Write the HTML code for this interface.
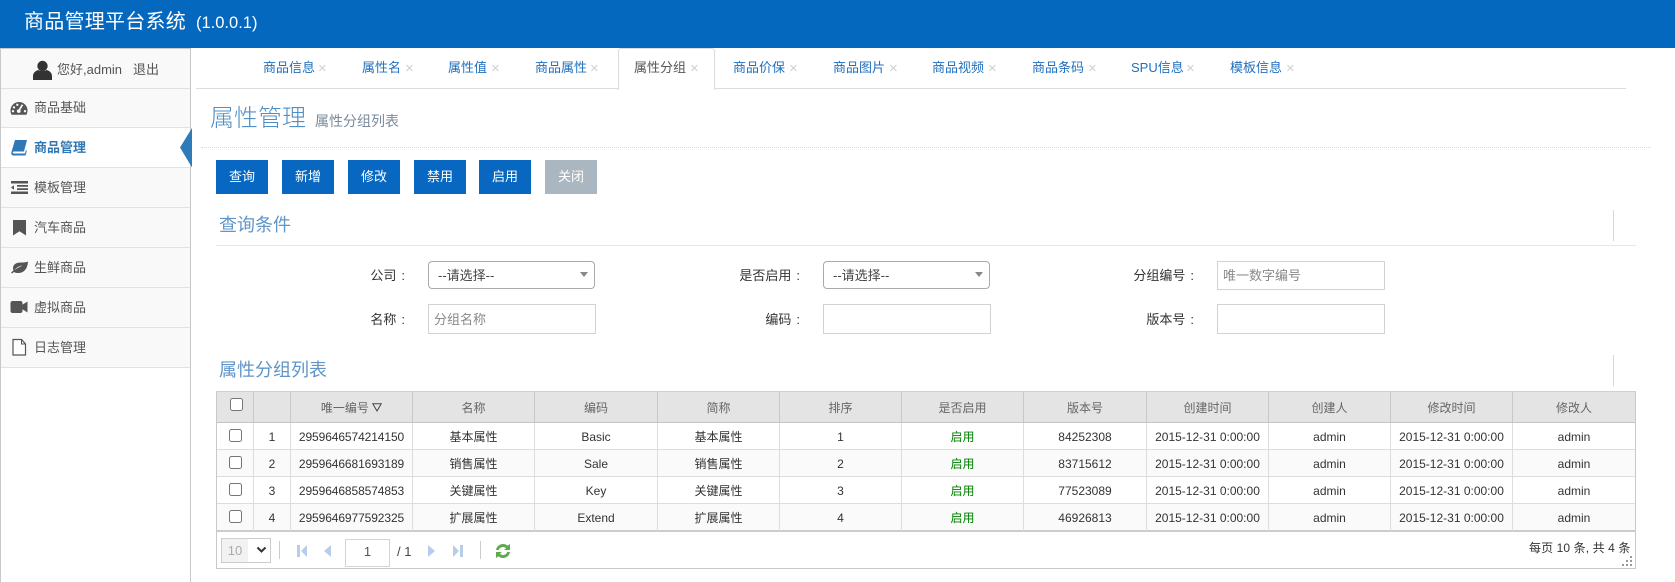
<!DOCTYPE html>
<html lang="zh-CN">
<head>
<meta charset="utf-8">
<title>商品管理平台系统</title>
<style>
html,body{margin:0;padding:0;width:1675px;height:582px;overflow:hidden;background:#fff}
body{position:relative;font-family:"Liberation Sans","Noto Sans CJK SC",sans-serif;font-size:13px;color:#333}
.a{position:absolute;white-space:nowrap}
.hd{left:0;top:0;width:1675px;height:48px;background:#0568bf}
.side{left:0;top:48px;width:189px;height:534px;border-left:1px solid #c8c8c8;border-right:1px solid #c8c8c8;border-top:1px solid #c8c8c8;background:#fff}
.m{left:1px;width:189px;height:39px;border-bottom:1px solid #e2e2e2;background:#f9f9f9;line-height:39px;color:#555;font-size:13px}
.m span{position:absolute;left:33px;top:0}
.m svg{position:absolute;left:9px;top:10px}
.tab{top:48px;height:40px;line-height:39px;font-size:13px;color:#1f6fc0}
.x{position:absolute;top:57px;color:#d0d0d0;font-size:15px;line-height:24px}
.btn{top:160px;width:52px;height:34px;background:#0767c1;color:#fff;text-align:center;line-height:33px;font-size:13px}
.ttl{font-size:18px;color:#5f95c8;line-height:26px}
.lb{font-size:13px;color:#333;line-height:20px;text-align:right}
.lb span{margin-left:5px}
.sel{width:165px;height:26px;border:1px solid #aaa;border-radius:4px;background:#fff;line-height:28px;font-size:13px;color:#444}
.sel b{position:absolute;left:9px;top:0;font-weight:normal}
.sel i{position:absolute;right:6px;top:10px;width:0;height:0;border-left:4px solid transparent;border-right:4px solid transparent;border-top:5px solid #888}
input.ip{position:absolute;box-sizing:border-box;width:168px;height:29px;margin:0;padding:0 5px;border:1px solid #d2d2d2;background:#fff;font:13px "Liberation Sans","Noto Sans CJK SC",sans-serif;color:#555;outline:0}
input.ip::placeholder{color:#888;opacity:1}
.grid{left:216px;top:391px;width:1418px;height:176px;border:1px solid #c8c8c8;border-top:1px solid #c3d3e2;background:#fff}
table{border-collapse:separate;border-spacing:0;table-layout:fixed;width:1418px;position:absolute;left:0;top:0;font-size:12px}
td,th{box-sizing:border-box;padding:0;text-align:center;overflow:hidden;white-space:nowrap;font-weight:normal}
th{height:31px;background:#e4e4e4;color:#666;border-right:1px solid #c8c8c8;border-bottom:1px solid #c4c4c4}
td{height:27px;color:#333;border-right:1px solid #ddd;border-bottom:1px solid #ddd}
td:nth-child(2),td:nth-child(3),td:nth-child(5),td:nth-child(7),td:nth-child(9),td:nth-child(10),td:nth-child(11),td:nth-child(12),td:nth-child(13){padding-top:2px}
tr:nth-child(even) td{background:#fafafa}
tr:last-child td{height:28px;border-bottom:2px solid #ccc}
th:last-child,td:last-child{border-right:0}
td input,th input{margin:0;width:13px;height:13px;vertical-align:middle;position:relative}
td input{top:-1px}
th:first-child{padding-left:2px}
th input{top:-3px}
.n{letter-spacing:-.1px}
.g{color:#008000}
.sp{width:1px;background:#ccc}
</style>
</head>
<body>
<div class="a hd"></div>
<div class="a" style="left:24px;top:7px;line-height:30px;font-size:20px;letter-spacing:.25px;color:#fff">商品管理平台系统</div>
<div class="a" style="left:196px;top:8px;line-height:30px;font-size:16.5px;color:#fff">(1.0.0.1)</div>

<!-- sidebar -->
<div class="a side"></div>
<div class="a" style="left:1px;top:49px;width:189px;height:39px;background:#f9f9f9;border-bottom:1px solid #e0e0e0"></div>
<svg class="a" style="left:32px;top:60px" width="20" height="20" viewBox="0 0 20 20"><circle cx="10.5" cy="6" r="5.2" fill="#333"/><path d="M1 20v-4c0-3.5 3-5.5 5.5-6 2.300 1.500 5.700 1.500 8 0 2.500.5 5.500 2.500 5.500 6v4z" fill="#333"/></svg>
<div class="a" style="left:57px;top:59px;line-height:22px;font-size:13px;color:#555">您好,admin</div>
<div class="a" style="left:133px;top:59px;line-height:22px;font-size:13px;color:#555">退出</div>

<div class="a m" style="top:89px;height:38px;line-height:37px"><svg width="18" height="18" viewBox="0 0 18 18"><path fill="#555" fill-rule="evenodd" d="M9 3a8.500 8.500 0 0 0-8.500 8.500c0 1.500.4 3 1.100 4.200h14.800c.7-1.200 1.100-2.700 1.100-4.200A8.500 8.500 0 0 0 9 3zM4 7.200a1.200 1.200 0 1 1 0 2.400 1.200 1.200 0 0 1 0-2.400zM3 11a1.200 1.200 0 1 1 0 2.400A1.200 1.200 0 0 1 3 11zm4.300-6.400a1.200 1.200 0 1 1 0 2.400 1.200 1.200 0 0 1 0-2.400zm5.900 1.500L10.300 11a1.900 1.900 0 1 1-1.500-.8l2.900-4.900zM15 11a1.200 1.200 0 1 1 0 2.400 1.200 1.200 0 0 1 0-2.400z"/></svg><span>商品基础</span></div>
<div class="a m" style="top:128px;background:#fff;color:#2f78b6;font-weight:bold"><svg width="18" height="18" viewBox="0 0 18 18"><path fill="#2f78b6" d="M5 2h12l-3 11.500H4c-.9 0-1.300.5-1.300 1s.4 1 1.300 1h11l.9-3.300 1 .6-1.400 4.700H3.500C2 17.500 1 16.200 1.300 14.500z"/></svg><span>商品管理</span></div>
<div class="a m" style="top:168px"><svg width="18" height="18" viewBox="0 0 18 18"><path fill="#555" d="M1 3h17v2.500H1zM7 7h11v1.800H7zM7 10.200h11V12H7zM1 13.500h17V16H1zM1 9.500l3-2.300v4.600z"/></svg><span>模板管理</span></div>
<div class="a m" style="top:208px"><svg width="18" height="18" viewBox="0 0 18 18"><path fill="#555" d="M3 2h13v15.500l-6.500-4.300L3 17.500z"/></svg><span>汽车商品</span></div>
<div class="a m" style="top:248px"><svg width="18" height="18" viewBox="0 0 18 18"><path fill="#555" fill-rule="evenodd" d="M18 3.500c-.5 8-4.500 11.500-10 11.500-1.500 0-3-.3-4-1L2 15.500l-1-.7 2.500-2.500C3.200 11.500 3 10.800 3 10 3 6 7 4.500 11 4.500c3 0 5.500-.2 7-1zM12.500 7.500C9 8 6.500 9.500 4.500 12c2.500-1.700 5-3 8-4.500z"/></svg><span>生鲜商品</span></div>
<div class="a m" style="top:288px"><svg width="18" height="18" viewBox="0 0 18 18"><path fill="#555" d="M2.500 3h8c1.100 0 2 .9 2 2v8c0 1.100-.9 2-2 2h-8c-1.100 0-2-.9-2-2V5c0-1.100.9-2 2-2zM12 7l5.500-3.500v11L12 11z"/></svg><span>虚拟商品</span></div>
<div class="a m" style="top:328px"><svg width="18" height="18" viewBox="0 0 18 18"><path fill="#fff" stroke="#555" stroke-width="1.200" d="M3 1.500h8.500l4 4.500v11H3z"/><path fill="none" stroke="#555" stroke-width="1" d="M11.500 1.500V6h4"/></svg><span>日志管理</span></div>
<svg class="a" style="left:180px;top:128px" width="12" height="40" viewBox="0 0 12 40"><path fill="#2f7ab8" d="M12 0v39.500L0 19.500z"/></svg>

<!-- tabs -->
<div class="a" style="left:196px;top:88px;width:1430px;height:1px;background:#dcdcdc"></div>
<div class="a" style="left:618px;top:48px;width:95px;height:41px;background:#fff;border:1px solid #dcdcdc;border-bottom:0;border-radius:3px 3px 0 0"></div>
<div class="a tab" style="left:263px">商品信息</div><div class="a x" style="left:318px">×</div>
<div class="a tab" style="left:362px">属性名</div><div class="a x" style="left:405px">×</div>
<div class="a tab" style="left:448px">属性值</div><div class="a x" style="left:491px">×</div>
<div class="a tab" style="left:535px">商品属性</div><div class="a x" style="left:590px">×</div>
<div class="a tab" style="left:634px;color:#555">属性分组</div><div class="a x" style="left:690px">×</div>
<div class="a tab" style="left:733px">商品价保</div><div class="a x" style="left:789px">×</div>
<div class="a tab" style="left:833px">商品图片</div><div class="a x" style="left:889px">×</div>
<div class="a tab" style="left:932px">商品视频</div><div class="a x" style="left:988px">×</div>
<div class="a tab" style="left:1032px">商品条码</div><div class="a x" style="left:1088px">×</div>
<div class="a tab" style="left:1131px">SPU信息</div><div class="a x" style="left:1186px">×</div>
<div class="a tab" style="left:1230px">模板信息</div><div class="a x" style="left:1286px">×</div>

<!-- page title -->
<div class="a" style="left:210px;top:101px;line-height:36px;font-size:24px;color:#4f8fc6;font-weight:300">属性管理</div>
<div class="a" style="left:315px;top:110px;line-height:22px;font-size:14px;color:#7a8a9c">属性分组列表</div>
<div class="a" style="left:201px;top:147px;width:1450px;height:0;border-top:1px dotted #d8d8d8"></div>

<!-- buttons -->
<div class="a btn" style="left:216px">查询</div>
<div class="a btn" style="left:282px">新增</div>
<div class="a btn" style="left:348px">修改</div>
<div class="a btn" style="left:414px">禁用</div>
<div class="a btn" style="left:479px">启用</div>
<div class="a btn" style="left:545px;background:#aab7c0">关闭</div>

<!-- query -->
<div class="a ttl" style="left:219px;top:212px">查询条件</div>
<div class="a" style="left:1613px;top:210px;width:1px;height:31px;background:#d8d8d8"></div>
<div class="a" style="left:216px;top:245px;width:1420px;height:1px;background:#e3e7ec"></div>

<div class="a lb" style="left:300px;top:266px;width:105px">公司<span>:</span></div>
<div class="a sel" style="left:428px;top:261px"><b>--请选择--</b><i></i></div>
<div class="a lb" style="left:695px;top:266px;width:105px">是否启用<span>:</span></div>
<div class="a sel" style="left:823px;top:261px"><b>--请选择--</b><i></i></div>
<div class="a lb" style="left:1089px;top:266px;width:105px">分组编号<span>:</span></div>
<input class="ip" style="left:1217px;top:261px" placeholder="唯一数字编号">

<div class="a lb" style="left:300px;top:310px;width:105px">名称<span>:</span></div>
<input class="ip" style="left:428px;top:304px;height:30px" placeholder="分组名称">
<div class="a lb" style="left:695px;top:310px;width:105px">编码<span>:</span></div>
<input class="ip" style="left:823px;top:304px;height:30px">
<div class="a lb" style="left:1089px;top:310px;width:105px">版本号<span>:</span></div>
<input class="ip" style="left:1217px;top:304px;height:30px">

<!-- list -->
<div class="a ttl" style="left:219px;top:357px">属性分组列表</div>
<div class="a" style="left:1613px;top:355px;width:1px;height:31px;background:#d8d8d8"></div>

<div class="a grid">
<table>
<colgroup><col style="width:37px"><col style="width:37px"><col style="width:122px"><col style="width:122px"><col style="width:123px"><col style="width:122px"><col style="width:122px"><col style="width:122px"><col style="width:123px"><col style="width:122px"><col style="width:122px"><col style="width:122px"><col style="width:122px"></colgroup>
<thead><tr><th><input type="checkbox"></th><th></th><th>唯一编号 <svg width="10" height="9" viewBox="0 0 10 9" style="vertical-align:-0.500px"><path fill="none" stroke="#444" stroke-width="1" d="M.8.800h8.400L5 8z"/></svg></th><th>名称</th><th>编码</th><th>简称</th><th>排序</th><th>是否启用</th><th>版本号</th><th>创建时间</th><th>创建人</th><th>修改时间</th><th>修改人</th></tr></thead>
<tbody>
<tr><td><input type="checkbox"></td><td>1</td><td class="n">2959646574214150</td><td>基本属性</td><td>Basic</td><td>基本属性</td><td>1</td><td class="g">启用</td><td>84252308</td><td>2015-12-31 0:00:00</td><td>admin</td><td>2015-12-31 0:00:00</td><td>admin</td></tr>
<tr><td><input type="checkbox"></td><td>2</td><td class="n">2959646681693189</td><td>销售属性</td><td>Sale</td><td>销售属性</td><td>2</td><td class="g">启用</td><td>83715612</td><td>2015-12-31 0:00:00</td><td>admin</td><td>2015-12-31 0:00:00</td><td>admin</td></tr>
<tr><td><input type="checkbox"></td><td>3</td><td class="n">2959646858574853</td><td>关键属性</td><td>Key</td><td>关键属性</td><td>3</td><td class="g">启用</td><td>77523089</td><td>2015-12-31 0:00:00</td><td>admin</td><td>2015-12-31 0:00:00</td><td>admin</td></tr>
<tr><td><input type="checkbox"></td><td>4</td><td class="n">2959646977592325</td><td>扩展属性</td><td>Extend</td><td>扩展属性</td><td>4</td><td class="g">启用</td><td>46926813</td><td>2015-12-31 0:00:00</td><td>admin</td><td>2015-12-31 0:00:00</td><td>admin</td></tr>
</tbody>
</table>
</div>

<!-- pagination -->
<div class="a" style="left:221px;top:538px;width:48px;height:23px;border:1px solid #ccc;background:#fff"></div>
<div class="a" style="left:222px;top:539px;width:26px;height:23px;background:#f2f2f2;color:#aaa;font-size:13px;line-height:23px;text-align:center">10</div>
<svg class="a" style="left:256px;top:546px" width="11" height="8" viewBox="0 0 11 8"><path fill="none" stroke="#333" stroke-width="2" d="M1.500 1.500 5.500 5.500 9.500 1.500"/></svg>
<div class="a sp" style="left:279px;top:541px;height:18px"></div>
<svg class="a" style="left:296px;top:545px" width="12" height="12" viewBox="0 0 12 12"><path fill="#b8cdea" d="M1 0h3v12H1zM11 0v12L5 6z"/></svg>
<svg class="a" style="left:324px;top:545px" width="8" height="12" viewBox="0 0 8 12"><path fill="#b8cdea" d="M7 0v12L0 6z"/></svg>
<div class="a" style="left:345px;top:539px;width:43px;height:26px;border:1px solid #d4d4d4;text-align:center;line-height:24px;font-size:13px;color:#555">1</div>
<div class="a" style="left:397px;top:540px;line-height:24px;font-size:13px;color:#444">/ 1</div>
<svg class="a" style="left:427px;top:545px" width="8" height="12" viewBox="0 0 8 12"><path fill="#b8cdea" d="M1 0v12l7-6z"/></svg>
<svg class="a" style="left:452px;top:545px" width="12" height="12" viewBox="0 0 12 12"><path fill="#b8cdea" d="M1 0v12l6-6zM8 0h3v12H8z"/></svg>
<div class="a sp" style="left:480px;top:541px;height:18px"></div>
<svg class="a" style="left:494px;top:543px" width="18" height="16" viewBox="0 0 18 16"><path fill="#5cab4f" d="M2 7c.5-3.500 3.500-6 7-6 2 0 3.500.7 4.500 1.700L16 1v6h-6l2-1.800C11.300 4.500 10.300 4 9 4 7 4 5.300 5.200 4.800 7zM16 9c-.5 3.500-3.500 6-7 6-2 0-3.500-.7-4.500-1.700L2 15V9h6l-2 1.800c.7.700 1.700 1.200 3 1.200 2 0 3.700-1.200 4.200-3z"/></svg>
<div class="a" style="left:1529px;top:538px;line-height:20px;font-size:12px;letter-spacing:.1px;color:#333">每页 10 条, 共 4 条</div>
<svg class="a" style="left:1622px;top:556px" width="12" height="11" viewBox="0 0 12 11"><path fill="#999" d="M8 0h2v2H8zM4 4h2v2H4zM8 4h2v2H8zM0 8h2v2H0zM4 8h2v2H4zM8 8h2v2H8z"/></svg>
</body>
</html>
